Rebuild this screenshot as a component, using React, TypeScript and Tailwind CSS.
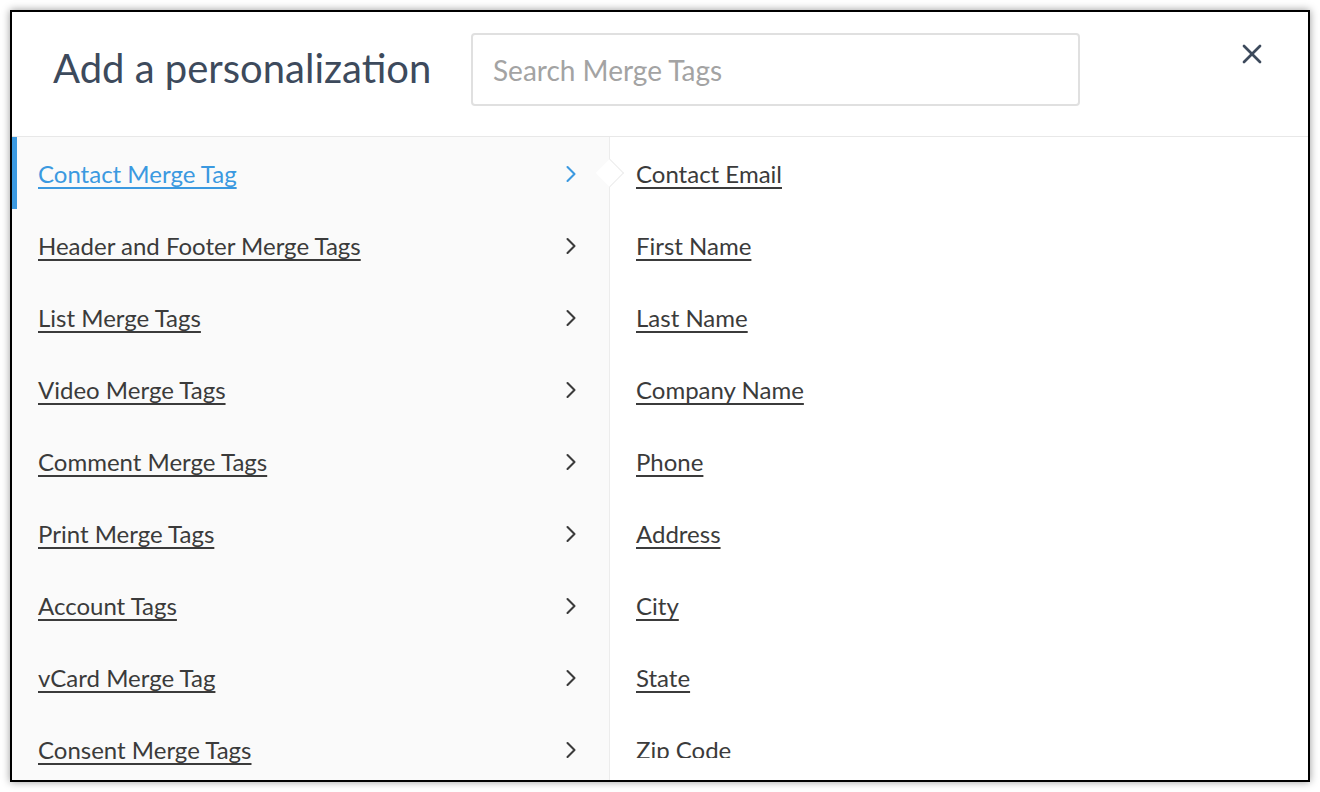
import React from 'react';
import { X, ChevronRight } from 'lucide-react';

const groups = [
  'Contact Merge Tag',
  'Header and Footer Merge Tags',
  'List Merge Tags',
  'Video Merge Tags',
  'Comment Merge Tags',
  'Print Merge Tags',
  'Account Tags',
  'vCard Merge Tag',
  'Consent Merge Tags',
];

const tags = ['Contact Email', 'First Name', 'Last Name', 'Company Name', 'Phone', 'Address', 'City', 'State', 'Zip Code'];

export default function App() {
  return (
    <div className="h-[792px] w-[1320px] bg-white p-[10px] font-[Lato,sans-serif]">
      <div className="flex h-[772px] flex-col overflow-hidden border-2 border-black bg-white shadow-[0_0_8px_rgba(0,0,0,0.4)]">
        {/* header */}
        <div className="flex h-[125px] shrink-0 items-start border-b border-[#e8e8e8]">
          <h1 className="ml-[41px] mt-[30px] w-[377px] whitespace-nowrap text-[40px] leading-[52px] text-[#3d4a5c]">Add a personalization</h1>
          <input
            placeholder="Search Merge Tags"
            className="ml-[41px] mt-[21px] h-[73px] w-[609px] rounded border-2 border-[#e0e0e0] px-5 font-[Lato,sans-serif] text-[28px] text-[#333] placeholder:text-[#a3a3a3] outline-none"
          />
          <button className="ml-[156px] mt-[26px] text-[#3d4a5c]">
            <X className="h-[32px] w-[32px]" strokeWidth={2} />
          </button>
        </div>
        {/* body */}
        <div className="flex min-h-0 flex-1">
          <div className="w-[598px] shrink-0 border-r border-[#ececec] bg-[#fafafa]">
            {groups.map((g, i) => (
              <div key={g} className="relative flex h-[72px] items-center pr-[24px] pt-[2px]">
                {i === 0 && <div className="absolute inset-y-0 left-0 w-[5px] bg-[#3b99e0]" />}
                {i === 0 && (
                  <div className="absolute right-[-11px] top-[26px] h-[20px] w-[20px] rotate-45 border-r border-t border-[#ececec] bg-white" />
                )}
                <a
                  href="#"
                  className={`ml-[26px] flex-1 text-[24px] underline decoration-2 underline-offset-[4px] ${i === 0 ? 'text-[#3b99e0]' : 'text-[#3b3b3b]'}`}
                >
                  {g}
                </a>
                <ChevronRight className={`h-[28px] w-[28px] ${i === 0 ? 'text-[#3b99e0]' : 'text-[#3b3b3b]'}`} strokeWidth={1.8} />
              </div>
            ))}
          </div>
          <div className="h-[621px] flex-1 overflow-hidden">
            {tags.map((t) => (
              <div key={t} className="flex h-[72px] items-center pl-[26px] pt-[2px]">
                <a href="#" className="text-[24px] text-[#3b3b3b] underline decoration-2 underline-offset-[4px]">{t}</a>
              </div>
            ))}
          </div>
        </div>
      </div>
    </div>
  );
}
